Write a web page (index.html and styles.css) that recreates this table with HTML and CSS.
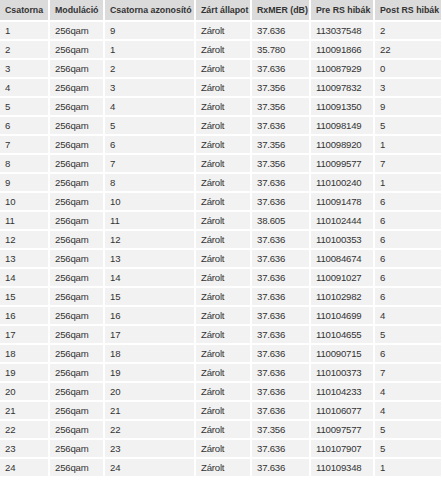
FILE: index.html
```html
<!DOCTYPE html>
<html lang="hu">
<head>
<meta charset="utf-8">
<title>Downstream csatornák</title>
<link rel="stylesheet" href="styles.css">
</head>
<body>
<table class="ds">
<colgroup>
<col class="c1"><col class="c2"><col class="c3"><col class="c4"><col class="c5"><col class="c6"><col class="c7">
</colgroup>
<thead>
<tr><th>Csatorna</th><th>Moduláció</th><th>Csatorna azonosító</th><th>Zárt állapot</th><th>RxMER (dB)</th><th>Pre RS hibák</th><th>Post RS hibák</th></tr>
</thead>
<tbody>
<tr><td>1</td><td>256qam</td><td>9</td><td>Zárolt</td><td>37.636</td><td>113037548</td><td>2</td></tr>
<tr><td>2</td><td>256qam</td><td>1</td><td>Zárolt</td><td>35.780</td><td>110091866</td><td>22</td></tr>
<tr><td>3</td><td>256qam</td><td>2</td><td>Zárolt</td><td>37.636</td><td>110087929</td><td>0</td></tr>
<tr><td>4</td><td>256qam</td><td>3</td><td>Zárolt</td><td>37.356</td><td>110097832</td><td>3</td></tr>
<tr><td>5</td><td>256qam</td><td>4</td><td>Zárolt</td><td>37.356</td><td>110091350</td><td>9</td></tr>
<tr><td>6</td><td>256qam</td><td>5</td><td>Zárolt</td><td>37.636</td><td>110098149</td><td>5</td></tr>
<tr><td>7</td><td>256qam</td><td>6</td><td>Zárolt</td><td>37.356</td><td>110098920</td><td>1</td></tr>
<tr><td>8</td><td>256qam</td><td>7</td><td>Zárolt</td><td>37.356</td><td>110099577</td><td>7</td></tr>
<tr><td>9</td><td>256qam</td><td>8</td><td>Zárolt</td><td>37.636</td><td>110100240</td><td>1</td></tr>
<tr><td>10</td><td>256qam</td><td>10</td><td>Zárolt</td><td>37.636</td><td>110091478</td><td>6</td></tr>
<tr><td>11</td><td>256qam</td><td>11</td><td>Zárolt</td><td>38.605</td><td>110102444</td><td>6</td></tr>
<tr><td>12</td><td>256qam</td><td>12</td><td>Zárolt</td><td>37.636</td><td>110100353</td><td>6</td></tr>
<tr><td>13</td><td>256qam</td><td>13</td><td>Zárolt</td><td>37.636</td><td>110084674</td><td>6</td></tr>
<tr><td>14</td><td>256qam</td><td>14</td><td>Zárolt</td><td>37.636</td><td>110091027</td><td>6</td></tr>
<tr><td>15</td><td>256qam</td><td>15</td><td>Zárolt</td><td>37.636</td><td>110102982</td><td>6</td></tr>
<tr><td>16</td><td>256qam</td><td>16</td><td>Zárolt</td><td>37.636</td><td>110104699</td><td>4</td></tr>
<tr><td>17</td><td>256qam</td><td>17</td><td>Zárolt</td><td>37.636</td><td>110104655</td><td>5</td></tr>
<tr><td>18</td><td>256qam</td><td>18</td><td>Zárolt</td><td>37.636</td><td>110090715</td><td>6</td></tr>
<tr><td>19</td><td>256qam</td><td>19</td><td>Zárolt</td><td>37.636</td><td>110100373</td><td>7</td></tr>
<tr><td>20</td><td>256qam</td><td>20</td><td>Zárolt</td><td>37.636</td><td>110104233</td><td>4</td></tr>
<tr><td>21</td><td>256qam</td><td>21</td><td>Zárolt</td><td>37.636</td><td>110106077</td><td>4</td></tr>
<tr><td>22</td><td>256qam</td><td>22</td><td>Zárolt</td><td>37.356</td><td>110097577</td><td>5</td></tr>
<tr><td>23</td><td>256qam</td><td>23</td><td>Zárolt</td><td>37.636</td><td>110107907</td><td>5</td></tr>
<tr><td>24</td><td>256qam</td><td>24</td><td>Zárolt</td><td>37.636</td><td>110109348</td><td>1</td></tr>
</tbody>
</table>
</body>
</html>
```
FILE: styles.css
```css
html, body {
  margin: 0;
  padding: 0;
  background: #ffffff;
}

body {
  font-family: "Liberation Sans", Arial, sans-serif;
  font-size: 9.6px;
  letter-spacing: -0.2px;
  color: #333333;
}

.ds {
  border-collapse: separate;
  border-spacing: 2px;
  margin: -2px 0 0 -2px;
  table-layout: fixed;
  width: 445px;
}

.c1 { width: 48px; }
.c2 { width: 53px; }
.c3 { width: 89px; }
.c4 { width: 54px; }
.c5 { width: 57px; }
.c6 { width: 62px; }
.c7 { width: 66px; }

.ds th,
.ds td {
  padding: 0 0 0 5px;
  text-align: left;
  white-space: nowrap;
  overflow: hidden;
  vertical-align: middle;
}

.ds th {
  height: 20px;
  background: #dbdbdb;
  font-size: 8.8px;
  letter-spacing: 0;
  font-weight: bold;
  color: #333333;
}

.ds td {
  height: 17px;
  background: #f2f2f2;
  font-weight: normal;
}
```
